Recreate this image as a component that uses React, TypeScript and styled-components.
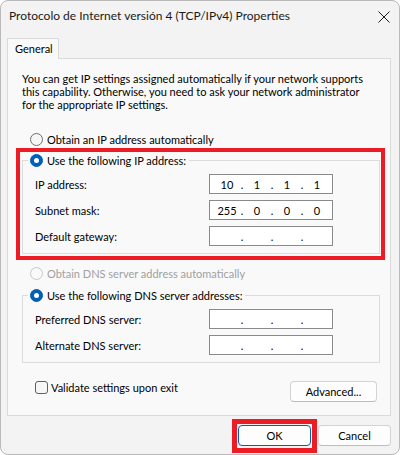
import React from "react";
import styled, { createGlobalStyle } from "styled-components";

const GlobalStyle = createGlobalStyle`
  html, body { margin: 0; padding: 0; background: #ffffff; }
  body { font-family: "Lato", "Noto Sans", sans-serif; font-size: 11px; color: #000; }
  * { box-sizing: border-box; }
`;

const Window = styled.div`
  position: relative;
  width: 400px;
  height: 455px;
  border: 1px solid #b9b9b9;
  border-radius: 8px;
  background: #f3f3f3;
  display: flex;
  flex-direction: column;
`;

const TitleBar = styled.div`
  height: 29px;
  display: flex;
  align-items: center;
  justify-content: space-between;
  padding: 0 9px 0 8px;
  flex-shrink: 0;
`;

const Title = styled.div`
  font-size: 12px;
  color: #1a1a1a;
  white-space: nowrap;
`;

const CloseIcon = styled.svg`
  width: 12px;
  height: 12px;
  margin-top: 2px;
  display: block;
`;

const TabStrip = styled.div`
  margin-top: 8px;
  padding-left: 6px;
  height: 20px;
  display: flex;
  flex-shrink: 0;
`;

const Tab = styled.div`
  position: relative;
  z-index: 1;
  width: 52px;
  height: 21px;
  border: 1px solid #dadada;
  border-bottom: none;
  background: #f9f9f9;
  padding-left: 7px;
  line-height: 19px;
  font-size: 11px;
`;

const Panel = styled.div`
  flex: 1;
  margin: 0 8px 0 6px;
  border: 1px solid #dadada;
  background: #f9f9f9;
  display: flex;
  flex-direction: column;
`;

const Description = styled.p`
  margin: 13px 14px 0;
  line-height: 13px;
  white-space: nowrap;
`;

const RadioRow = styled.label<{ $disabled?: boolean }>`
  display: flex;
  align-items: center;
  gap: 4px;
  height: 16px;
  color: ${p => (p.$disabled ? "#a0a0a0" : "#000")};
  white-space: nowrap;
`;

const TopRadio = styled(RadioRow)<{ $top: number }>`
  margin: ${p => p.$top}px 0 0 22px;
`;

const RadioDot = styled.span<{ $checked?: boolean; $disabled?: boolean }>`
  position: relative;
  width: 13px;
  height: 13px;
  border-radius: 50%;
  flex-shrink: 0;
  border: 1px solid ${p => (p.$checked ? "#005fb8" : p.$disabled ? "#c8c8c8" : "#6e6e6e")};
  background: ${p => (p.$checked ? "#005fb8" : p.$disabled ? "#f9f9f9" : "#f6f6f6")};
  &::after {
    content: "";
    display: ${p => (p.$checked ? "block" : "none")};
    position: absolute;
    left: 50%;
    top: 50%;
    width: 5px;
    height: 5px;
    margin: -2.5px 0 0 -2.5px;
    border-radius: 50%;
    background: #ffffff;
  }
`;

const GroupWrap = styled.div<{ $top: number }>`
  position: relative;
  margin: ${p => p.$top}px 10px 0 14px;
`;

const GroupBox = styled.fieldset`
  margin: 0;
  min-width: 0;
  border: 1px solid #dcdcdc;
  padding: 6px 0 7px 0;
  display: flex;
  flex-direction: column;
  gap: 6px;
`;

const GroupLegend = styled.legend`
  margin-left: 5px;
  padding: 0 3px 0 2px;
`;

const Highlight = styled.div<{ $t: number; $r: number; $b: number; $l: number; $w: number }>`
  position: absolute;
  top: ${p => -p.$t}px;
  right: ${p => -p.$r}px;
  bottom: ${p => -p.$b}px;
  left: ${p => -p.$l}px;
  border: ${p => p.$w}px solid #ec1c24;
  pointer-events: none;
`;

const FieldRow = styled.div`
  display: flex;
  align-items: center;
  height: 20px;
  padding-left: 12px;
`;

const FieldLabel = styled.span`
  width: 174px;
  flex-shrink: 0;
  white-space: nowrap;
`;

const IpBox = styled.div`
  width: 124px;
  height: 20px;
  border: 1px solid #8a8a8a;
  background: #ffffff;
  display: flex;
  align-items: center;
  padding-left: 5px;
`;

const Octet = styled.span`
  width: 24px;
  text-align: center;
`;

const Dot = styled.span`
  width: 6px;
  text-align: center;
`;

const BottomRow = styled.div`
  margin: 18px 13px 0 27px;
  display: flex;
  justify-content: space-between;
  align-items: flex-start;
`;

const CheckRow = styled.label`
  display: flex;
  align-items: center;
  gap: 3px;
  height: 13px;
  white-space: nowrap;
`;

const CheckBox = styled.span`
  width: 13px;
  height: 13px;
  border: 1px solid #5f5f5f;
  border-radius: 3px;
  background: #f6f6f6;
  flex-shrink: 0;
`;

const Button = styled.button<{ $width: number; $primary?: boolean }>`
  position: relative;
  width: ${p => p.$width}px;
  height: 21px;
  padding: 0;
  border: 1px solid ${p => (p.$primary ? "#005fb8" : "#d3d3d3")};
  border-bottom-color: ${p => (p.$primary ? "#005fb8" : "#bdbdbd")};
  border-radius: 4px;
  background: #fdfdfd;
  font-family: "Lato", "Noto Sans", sans-serif;
  font-size: 11px;
  color: #000;
  line-height: 19px;
`;

const ButtonBar = styled.div`
  margin: 9px 8px 8px 0;
  height: 21px;
  display: flex;
  justify-content: flex-end;
  gap: 7px;
  flex-shrink: 0;
`;

type IpProps = { value?: string[] };
function IpField({ value }: IpProps) {
  const parts = value ?? ["", "", "", ""];
  return (
    <IpBox>
      <Octet>{parts[0]}</Octet>
      <Dot>.</Dot>
      <Octet>{parts[1]}</Octet>
      <Dot>.</Dot>
      <Octet>{parts[2]}</Octet>
      <Dot>.</Dot>
      <Octet>{parts[3]}</Octet>
    </IpBox>
  );
}

export default function App() {
  return (
    <>
      <GlobalStyle />
      <Window>
        <TitleBar>
          <Title>Protocolo de Internet versión 4 (TCP/IPv4) Properties</Title>
          <CloseIcon viewBox="0 0 12 12">
            <path d="M0.5 0.5 L11.5 11.5 M11.5 0.5 L0.5 11.5" stroke="#1a1a1a" strokeWidth="1" fill="none" />
          </CloseIcon>
        </TitleBar>
        <TabStrip>
          <Tab>General</Tab>
        </TabStrip>
        <Panel>
          <Description>
            You can get IP settings assigned automatically if your network supports
            <br />
            this capability. Otherwise, you need to ask your network administrator
            <br />
            for the appropriate IP settings.
          </Description>

          <TopRadio $top={20}>
            <RadioDot />
            Obtain an IP address automatically
          </TopRadio>

          <GroupWrap $top={5}>
            <GroupBox>
              <GroupLegend>
                <RadioRow>
                  <RadioDot $checked />
                  Use the following IP address:
                </RadioRow>
              </GroupLegend>
              <FieldRow>
                <FieldLabel>IP address:</FieldLabel>
                <IpField value={["10", "1", "1", "1"]} />
              </FieldRow>
              <FieldRow>
                <FieldLabel>Subnet mask:</FieldLabel>
                <IpField value={["255", "0", "0", "0"]} />
              </FieldRow>
              <FieldRow>
                <FieldLabel>Default gateway:</FieldLabel>
                <IpField />
              </FieldRow>
            </GroupBox>
            <Highlight $t={4} $r={5} $b={6} $l={6} $w={4} />
          </GroupWrap>

          <TopRadio $top={11} $disabled>
            <RadioDot $disabled />
            Obtain DNS server address automatically
          </TopRadio>

          <GroupWrap $top={6}>
            <GroupBox>
              <GroupLegend>
                <RadioRow>
                  <RadioDot $checked />
                  Use the following DNS server addresses:
                </RadioRow>
              </GroupLegend>
              <FieldRow>
                <FieldLabel>Preferred DNS server:</FieldLabel>
                <IpField />
              </FieldRow>
              <FieldRow>
                <FieldLabel>Alternate DNS server:</FieldLabel>
                <IpField />
              </FieldRow>
            </GroupBox>
          </GroupWrap>

          <BottomRow>
            <CheckRow>
              <CheckBox />
              Validate settings upon exit
            </CheckRow>
            <Button $width={87}>Advanced...</Button>
          </BottomRow>
        </Panel>
        <ButtonBar>
          <Button $width={73} $primary>
            OK
            <Highlight $t={7} $r={7} $b={8} $l={7} $w={5} />
          </Button>
          <Button $width={73}>Cancel</Button>
        </ButtonBar>
      </Window>
    </>
  );
}
